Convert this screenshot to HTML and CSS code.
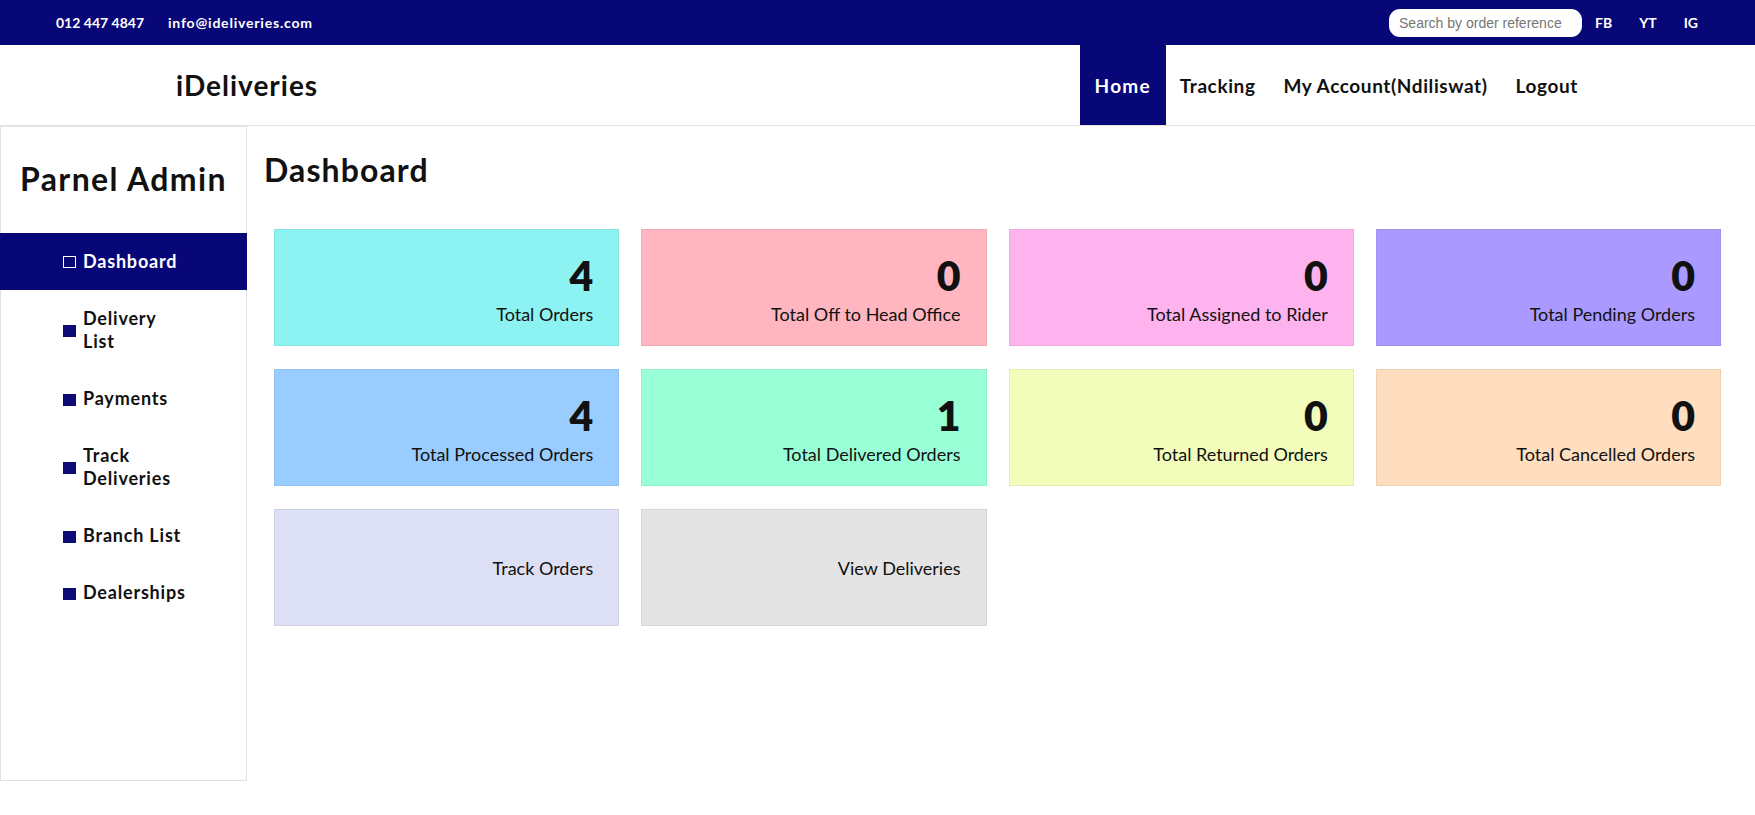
FILE: index.html
```html
<!DOCTYPE html>
<html lang="en">
<head>
<meta charset="utf-8">
<title>iDeliveries - Dashboard</title>
<link rel="stylesheet" href="styles.css">
</head>
<body>
<div class="topbar">
  <div class="contact">
    <span class="phone">012 447 4847</span>
    <span class="email">info@ideliveries.com</span>
  </div>
  <div class="topright">
    <input class="search" type="text" placeholder="Search by order reference">
    <span class="social">FB</span>
    <span class="social">YT</span>
    <span class="social">IG</span>
  </div>
</div>
<header class="header">
  <div class="logo">iDeliveries</div>
  <nav class="nav">
    <a class="nav-link active">Home</a>
    <a class="nav-link">Tracking</a>
    <a class="nav-link">My Account(Ndiliswat)</a>
    <a class="nav-link">Logout</a>
  </nav>
</header>
<div class="layout">
  <aside class="sidebar">
    <div class="side-title">Parnel Admin</div>
    <ul class="menu">
      <li class="menu-item active"><span class="sq"></span><span class="label">Dashboard</span></li>
      <li class="menu-item"><span class="sq"></span><span class="label">Delivery List</span></li>
      <li class="menu-item"><span class="sq"></span><span class="label">Payments</span></li>
      <li class="menu-item"><span class="sq"></span><span class="label">Track Deliveries</span></li>
      <li class="menu-item"><span class="sq"></span><span class="label">Branch List</span></li>
      <li class="menu-item"><span class="sq"></span><span class="label">Dealerships</span></li>
    </ul>
  </aside>
  <main class="main">
    <h1 class="page-title">Dashboard</h1>
    <div class="cards">
      <div class="card c-cyan"><div class="num">4</div><div class="lbl">Total Orders</div></div>
      <div class="card c-pink"><div class="num">0</div><div class="lbl">Total Off to Head Office</div></div>
      <div class="card c-orchid"><div class="num">0</div><div class="lbl">Total Assigned to Rider</div></div>
      <div class="card c-violet"><div class="num">0</div><div class="lbl">Total Pending Orders</div></div>
      <div class="card c-blue"><div class="num">4</div><div class="lbl">Total Processed Orders</div></div>
      <div class="card c-mint"><div class="num">1</div><div class="lbl">Total Delivered Orders</div></div>
      <div class="card c-lime"><div class="num">0</div><div class="lbl">Total Returned Orders</div></div>
      <div class="card c-peach"><div class="num">0</div><div class="lbl">Total Cancelled Orders</div></div>
      <div class="card link c-lav"><div class="lbl">Track Orders</div></div>
      <div class="card link c-gray"><div class="lbl">View Deliveries</div></div>
    </div>
  </main>
</div>
</body>
</html>
```
FILE: styles.css
```css
* { box-sizing: border-box; }
body {
  margin: 0;
  font-family: "Lato", "Open Sans", sans-serif;
  color: #111;
  background: #fff;
}
.topbar {
  height: 45px;
  background: #070778;
  display: flex;
  align-items: center;
  justify-content: space-between;
  padding: 0 44px 0 56px;
  color: #fff;
  font-weight: 700;
  font-size: 14px;
}
.contact { display: flex; gap: 24px; }
.email { letter-spacing: 0.8px; }
.topright { display: flex; align-items: center; }
.search {
  width: 193px;
  height: 28px;
  border: none;
  border-radius: 11px;
  padding: 0 10px;
  font-family: "Liberation Sans", Arial, sans-serif;
  font-size: 14px;
  margin-right: 13px;
  outline: none;
}
.search::placeholder { color: #767676; }
.social { margin-left: 14px; margin-right: 13px; }
.social:first-of-type { margin-left: 0; }
.header {
  height: 81px;
  display: flex;
  align-items: stretch;
  justify-content: space-between;
  border-bottom: 1px solid #e3e3e3;
  padding-left: 176px;
  padding-right: 163px;
}
.logo {
  display: flex;
  align-items: center;
  font-size: 28px;
  font-weight: 700;
  letter-spacing: 1px;
  color: #111;
}
.nav { display: flex; align-items: stretch; }
.nav-link {
  display: flex;
  align-items: center;
  padding: 0 14px;
  font-size: 19px;
  font-weight: 700;
  letter-spacing: 0.6px;
  color: #111;
}
.nav-link.active { background: #070778; color: #fff; padding: 0 15px; letter-spacing: 1.2px; }
.layout { display: flex; align-items: flex-start; }
.sidebar {
  width: 247px;
  height: 655px;
  border: 1px solid #dfe2e4;
  flex: none;
}
.side-title {
  text-align: center;
  font-size: 32px;
  font-weight: 700;
  letter-spacing: 1.4px;
  padding-top: 32px;
  height: 106px;
}
.menu { list-style: none; margin: 0; padding: 0; }
.menu-item {
  display: flex;
  align-items: center;
  padding: 17px 0 17px 62px;
  font-size: 18px;
  font-weight: 700;
  letter-spacing: 0.8px;
  line-height: 23px;
}
.menu-item.active { background: #070778; color: #fff; margin: 0 -1px 0 -1px; padding-left: 63px; }
.sq {
  width: 13px;
  height: 12px;
  background: #0c0c74;
  margin-right: 7px;
  margin-top: 2px;
  flex: none;
}
.menu-item.active .sq { background: transparent; border: 1px solid #fff; margin-top: 0; }
.label { max-width: 110px; }
.main {
  flex: 1;
  padding: 26px 34px 0 17px;
}
.page-title {
  margin: 0;
  font-size: 32px;
  font-weight: 700;
  letter-spacing: 1.1px;
  line-height: 36px;
}
.cards {
  margin-top: 41px;
  margin-left: 10px;
  display: grid;
  grid-template-columns: repeat(4, 1fr);
  gap: 23px 22px;
}
.card {
  height: 117px;
  padding: 22px 25px 0 0;
  text-align: right;
  border: 1px solid rgba(0,0,0,0.06);
}
.num {
  font-size: 41px;
  font-weight: 800;
  line-height: 48px;
}
.lbl {
  font-size: 18px;
  line-height: 24px;
  margin-top: 2px;
}
.card.link {
  display: flex;
  align-items: center;
  justify-content: flex-end;
  padding-top: 0;
}
.card.link .lbl { margin-top: 0; }
.c-cyan { background: #8df2f2; }
.c-pink { background: #ffb6c1; }
.c-orchid { background: #ffb3ee; }
.c-violet { background: #aa99ff; }
.c-blue { background: #99ccff; }
.c-mint { background: #99ffd6; }
.c-lime { background: #f2fcbb; }
.c-peach { background: #ffddbf; }
.c-lav { background: #dde0f5; }
.c-gray { background: #e4e4e4; }
```
